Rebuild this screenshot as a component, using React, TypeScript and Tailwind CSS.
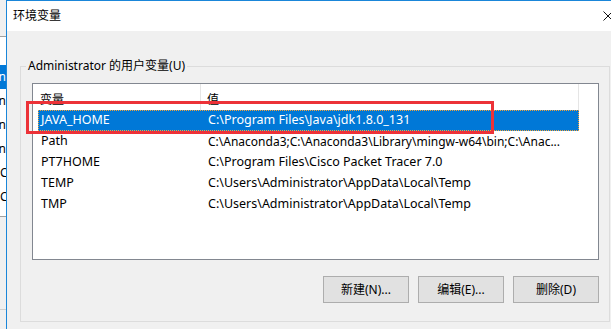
const font = { fontFamily: '"Noto Sans", "Noto Sans CJK SC", sans-serif' };

const rows = [
  ["JAVA_HOME", "C:\\Program Files\\Java\\jdk1.8.0_131"],
  ["Path", "C:\\Anaconda3;C:\\Anaconda3\\Library\\mingw-w64\\bin;C:\\Anac..."],
  ["PT7HOME", "C:\\Program Files\\Cisco Packet Tracer 7.0"],
  ["TEMP", "C:\\Users\\Administrator\\AppData\\Local\\Temp"],
  ["TMP", "C:\\Users\\Administrator\\AppData\\Local\\Temp"],
];

// right edge of a window lying behind the dialog
function BackWindow() {
  const items = ["admin", "admin", "admin", "admin"];
  return (
    <div className="w-[6px] shrink-0 bg-[#f0f0f0] flex flex-col">
      <div className="h-[37px] border-b border-[#a0a0a0]" />
      <div className="h-[180px] bg-white border-b border-[#a0a0a0] pt-[28px] text-[12px] text-black">
        {items.map((t, i) => (
          <div
            key={i}
            className={`h-[24px] flex items-center justify-end overflow-hidden whitespace-nowrap ${
              i === 0 ? "bg-[#0078d7] text-white" : ""
            }`}
          >
            {t}
          </div>
        ))}
        <div className="h-[24px] flex items-center overflow-hidden whitespace-nowrap">C:\</div>
        <div className="h-[24px] flex items-center overflow-hidden whitespace-nowrap">C:\</div>
      </div>
      <div className="h-[93px] border-b border-[#cfcfcf]" />
    </div>
  );
}

function Button({ label }: { label: string }) {
  return (
    <button className="w-[86px] h-[27px] bg-[#e1e1e1] border border-[#adadad] text-[12px] text-black flex items-center justify-center">
      {label}
    </button>
  );
}

export default function App() {
  return (
    <div className="w-[611px] h-[329px] overflow-hidden flex relative bg-[#f0f0f0]" style={font}>
      <BackWindow />

      <div className="flex-1 min-w-0 border-l border-t border-[#1a86d9] flex flex-col">
        <div className="h-[30px] bg-white flex items-center justify-between pl-[6px] shrink-0">
          <span className="text-[12px] text-black">环境变量</span>
          <svg width="10" height="10" viewBox="0 0 10 10" className="-mr-[2px] mb-[1px]">
            <path d="M0.5 0.5 L9.5 9.5 M9.5 0.5 L0.5 9.5" stroke="#111" strokeWidth="1" />
          </svg>
        </div>

        <div className="flex-1 pl-[13px] pt-[35px]">
          <div className="relative w-[590px] h-[256px] border border-[#dcdcdc] pl-[11px] pt-[16px]">
            <span className="absolute left-[5px] -top-[9px] px-[2px] bg-[#f0f0f0] text-[12px] leading-[16px] text-black">
              Administrator 的用户变量(U)
            </span>

            <div className="w-[567px] h-[177px] border border-[#828790] bg-white text-[12px] text-black">
              <div className="h-[26px] flex">
                <div className="w-[168px] pl-[7px] pt-[5px] flex items-center border-r border-[#e5e5e5]">变量</div>
                <div className="w-[378px] pl-[6px] pt-[5px] flex items-center border-r border-[#e5e5e5]">值</div>
              </div>
              {rows.map(([name, value], i) => (
                <div
                  key={name}
                  className={`ml-[5px] w-[541px] h-[21px] grid grid-cols-[170px_1fr] items-center whitespace-nowrap text-[12.5px] ${
                    i === 0
                      ? "bg-[#0078d7] text-white outline-1 outline-dotted -outline-offset-1 outline-[#f3a33a]"
                      : ""
                  }`}
                >
                  <span className="pl-[3px]">{name}</span>
                  <span className={`overflow-hidden ${name === "Path" ? "text-[12px]" : ""}`}>{value}</span>
                </div>
              ))}
            </div>

            <div className="w-[567px] mt-[16px] flex justify-end gap-[9px]">
              <Button label="新建(N)..." />
              <Button label="编辑(E)..." />
              <Button label="删除(D)" />
            </div>
          </div>
        </div>
      </div>

      {/* red annotation box drawn over the screenshot */}
      <div className="absolute left-[26px] top-[101px] w-[468px] h-[33px] border-[3px] border-[#ec3238]" />
    </div>
  );
}
